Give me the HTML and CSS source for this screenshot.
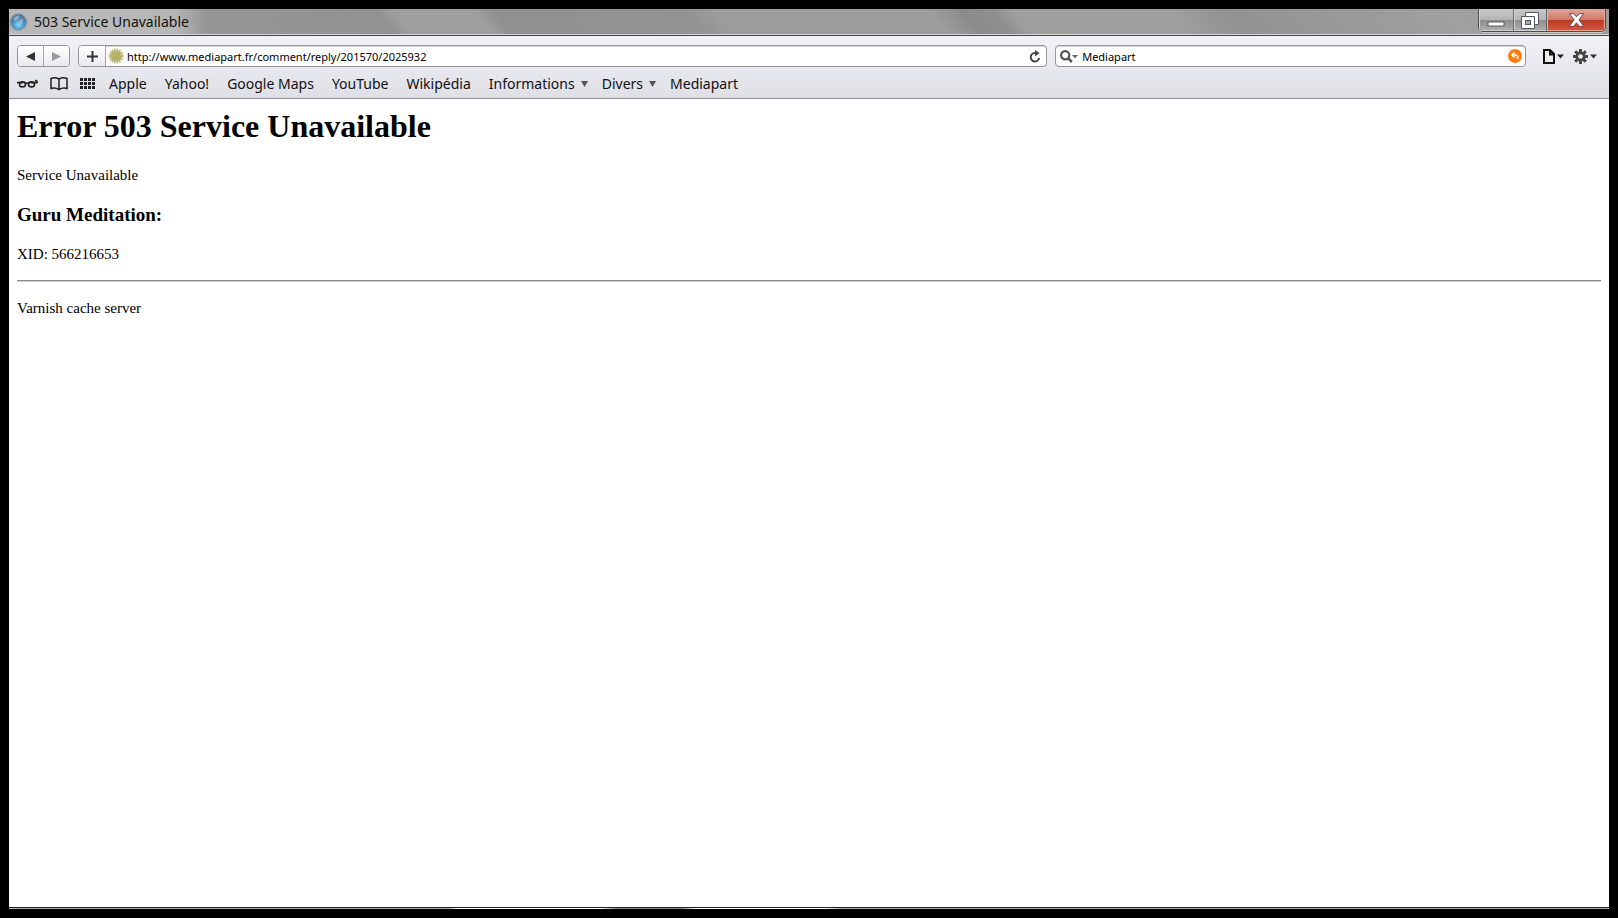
FILE: index.html
```
<!DOCTYPE html>
<html lang="fr">
<head>
<meta charset="utf-8">
<title>503 Service Unavailable</title>
<link rel="stylesheet" href="styles.css">
</head>
<body>
<div class="window">
  <header class="titlebar">
    <div class="title">
      <svg class="app-icon" width="19" height="20" viewBox="0 0 19 20" aria-hidden="true">
        <defs><radialGradient id="globe" cx="50%" cy="68%" r="60%"><stop offset="0" stop-color="#8fd8f8"/><stop offset="0.55" stop-color="#4a9bd2"/><stop offset="1" stop-color="#4a7395"/></radialGradient></defs>
        <circle cx="9.500" cy="10" r="9" fill="#8e9ba4"/>
        <circle cx="9.500" cy="10" r="7.500" fill="url(#globe)"/>
        <path d="M4.500 7q2-4 6-3.500l-1 3-4 2zM11 8l3-1-1 4-2 1z" fill="#c3d3da" opacity=".6"/>
        <path d="M14 4l-3 5-1-1z" fill="#b07078"/>
      </svg>
      <span class="title-text">503 Service Unavailable</span>
    </div>
    <div class="window-controls">
      <button class="control minimize" type="button" aria-label="Réduire">
        <svg width="18" height="6" viewBox="0 0 18 6"><rect x="1" y="1" width="16" height="4" fill="#fff" stroke="#5a5c66"/></svg>
      </button>
      <button class="control maximize" type="button" aria-label="Restaurer">
        <svg width="18" height="17" viewBox="0 0 18 17"><path d="M4.500.5h13v12h-4v4H.5v-12h4z" fill="#fff" stroke="#555762"/><path d="M4.500 4.500h9v8" fill="none" stroke="#555762"/><rect x="4.500" y="8.500" width="5" height="4" fill="#aaa" stroke="#555762"/></svg>
      </button>
      <button class="control close" type="button" aria-label="Fermer">
        <svg width="17" height="14" viewBox="0 0 17 14"><path d="M1.500.7h4.300l2.700 3.200L11.200.7h4.300L10.900 6.800l4.900 6.500h-4.500L8.500 9.800l-2.800 3.500H1.200l4.900-6.500z" fill="#fff" stroke="#6a4a4e"/></svg>
      </button>
    </div>
  </header>

  <div class="chrome">
    <div class="toolbar">
      <div class="nav">
        <button class="nav-button" type="button" aria-label="Page précédente"><svg width="9" height="9" viewBox="0 0 9 9"><path d="M9 0v9L0 4.500z" fill="#333"/></svg></button>
        <button class="nav-button" type="button" aria-label="Page suivante"><svg width="9" height="9" viewBox="0 0 9 9"><path d="M0 0v9l9-4.500z" fill="#9b9b9b"/></svg></button>
      </div>
      <form class="address">
        <button class="add" type="button" aria-label="Ajouter un signet"><svg width="11" height="11" viewBox="0 0 11 11"><path d="M5.500 0v11M0 5.500h11" stroke="#333" stroke-width="2"/></svg></button>
        <svg class="site-icon" width="16" height="16" viewBox="0 0 16 16" aria-hidden="true"><circle cx="8" cy="8" r="5.500" fill="#b4b36c"/><circle cx="8" cy="8" r="6.200" fill="none" stroke="#b4b36c" stroke-width="2.600" stroke-dasharray="1.500 0.935"/></svg>
        <input class="field" type="text" aria-label="Adresse" value="http://www.mediapart.fr/comment/reply/201570/2025932">
        <button class="plain" type="button" aria-label="Recharger"><svg width="12" height="13" viewBox="0 0 12 13"><path d="M7 3H5.800a4.200 4.200 0 1 0 4.300 4.800" fill="none" stroke="#444" stroke-width="2"/><path d="M6 0l4.500 3L6 6.500z" fill="#444"/></svg></button>
      </form>
      <form class="search">
        <button class="plain" type="button" aria-label="Options de recherche"><svg width="18" height="13" viewBox="0 0 18 13"><circle cx="5.200" cy="5.200" r="4.100" fill="none" stroke="#555" stroke-width="2.200"/><path d="M7.800 7.800l4 4.200" stroke="#555" stroke-width="2.600"/><path d="M12 5h6l-3 3.500z" fill="#666"/></svg></button>
        <input class="field" type="text" aria-label="Recherche" value="Mediapart">
        <button class="plain" type="button" aria-label="Revenir aux résultats"><svg width="14" height="14" viewBox="0 0 14 14"><circle cx="7" cy="7" r="7" fill="#fb7d10"/><path d="M6.500 3.500L4 6l2.500 2.500M4.200 6h3.300q2.700.3 2.200 4.200" fill="none" stroke="#fff" stroke-width="1.700"/></svg></button>
      </form>
      <div class="menus">
        <button class="plain" type="button" aria-label="Page"><svg width="21" height="15" viewBox="0 0 21 15"><path d="M1 1h6l4 4v9H1zM7 1v4.500h4" fill="none" stroke="#111" stroke-width="2"/><path d="M14 5.500h7l-3.500 4z" fill="#222"/></svg></button>
        <button class="plain" type="button" aria-label="Réglages"><svg width="24" height="15" viewBox="0 0 24 15"><g stroke="#444" stroke-width="3"><path d="M7.500 0v15M0 7.500h15M2.200 2.200l10.600 10.600M12.800 2.200L2.200 12.800"/></g><circle cx="7.500" cy="7.500" r="5" fill="#444"/><circle cx="7.500" cy="7.500" r="2.300" fill="#ededf2"/><path d="M17 5.500h7l-3.500 4z" fill="#333"/></svg></button>
      </div>
    </div>

    <nav class="bookmarks" aria-label="Signets">
      <div class="tools">
        <button class="plain" type="button" aria-label="Liste de lecture"><svg width="21" height="9" viewBox="0 0 21 9"><g fill="none" stroke="#222" stroke-width="1.600"><ellipse cx="5.500" cy="5.400" rx="3" ry="2.500"/><ellipse cx="14.500" cy="5.400" rx="3" ry="2.500"/><path d="M8.300 4.500q1.700-1 3.400 0M0 3.600h6M14 3.600h6q.5-2-2-2.400"/></g></svg></button>
        <button class="plain" type="button" aria-label="Tous les signets"><svg width="18" height="14" viewBox="0 0 18 14"><path d="M9 2Q5-.2 1 1.500v10q4-1.500 8 1 4-2.500 8-1v-10Q13-.2 9 2zv10.500" fill="none" stroke="#222" stroke-width="1.500"/></svg></button>
        <button class="plain" type="button" aria-label="Top Sites"><svg width="15" height="11" viewBox="0 0 15 11"><path d="M0 1.500h15M0 5.500h15M0 9.500h15" stroke="#222" stroke-width="3" stroke-dasharray="3 1"/></svg></button>
      </div>
      <a class="bookmark" href="#">Apple</a>
      <a class="bookmark" href="#">Yahoo!</a>
      <a class="bookmark" href="#">Google Maps</a>
      <a class="bookmark" href="#">YouTube</a>
      <a class="bookmark" href="#">Wikipédia</a>
      <a class="bookmark folder" href="#">Informations<svg width="7" height="6" viewBox="0 0 7 6"><path d="M0 0h7L3.500 6z" fill="#555"/></svg></a>
      <a class="bookmark folder" href="#">Divers<svg width="7" height="6" viewBox="0 0 7 6"><path d="M0 0h7L3.500 6z" fill="#555"/></svg></a>
      <a class="bookmark" href="#">Mediapart</a>
    </nav>
  </div>

  <main class="page">
    <h1>Error 503 Service Unavailable</h1>
    <p>Service Unavailable</p>
    <h3>Guru Meditation:</h3>
    <p>XID: 566216653</p>
    <hr>
    <p>Varnish cache server</p>
  </main>
  <div class="window-edge"></div>
</div>
</body>
</html>
```
FILE: styles.css
```
* { box-sizing: border-box; }

body {
  margin: 0;
  padding: 9px;
  min-height: 100vh;
  display: flex;
  background: #000;
  font-family: "Noto Sans", "Open Sans", sans-serif;
  color: #111;
}

button {
  margin: 0;
  padding: 0;
  border: 0;
  background: none;
  display: flex;
  align-items: center;
  justify-content: center;
}

svg { display: block; flex: none; }

.window {
  flex: 1;
  min-width: 0;
  display: flex;
  flex-direction: column;
  background: #fff;
}

.titlebar {
  height: 27px;
  display: flex;
  justify-content: space-between;
  align-items: flex-start;
  padding-right: 3px;
  border-bottom: 1px solid #44444a;
  box-shadow: inset 0 -1px #d5d5d8;
  background: linear-gradient(50deg, #a2a2a2 0 8%, #969696 12%, #929292 24%, #9f9f9f 25% 30%, #909090 31%, #939393 43%, #9d9d9d 45% 58%, #8b8b8b 60%, #909090 62%, #9e9e9e 63% 73%, #929292 76%, #a0a0a0 90%, #999 100%);
}

.title {
  height: 25px;
  display: flex;
  align-items: center;
  gap: 6px;
  padding: 1px 16px 0 0;
  background: linear-gradient(90deg, #c4c4c4aa, #c4c4c4aa 85%, transparent);
}

.title-text { font-size: 14px; line-height: 24px; white-space: nowrap; }

.window-controls {
  display: flex;
  height: 23px;
  border: 1px solid #4d4d52;
  border-top: 0;
  border-radius: 0 0 5px 5px;
  box-shadow: 0 1px #c8c8c8;
  overflow: hidden;
}

.control {
  width: 35px;
  border-right: 1px solid #66666a;
  background: linear-gradient(#c9c9c9, #b5b5b5 48%, #8d8d8d 52%, #b1b1b1);
  box-shadow: inset 1px 0 #d6d6d6, inset 0 -1px #ccc;
}
.minimize { padding-top: 8px; }
.maximize { width: 33px; }
.close {
  width: 58px;
  border-right: 0;
  background: linear-gradient(#dea598, #d2786a 48%, #bd3a22 52%, #d5573f);
  box-shadow: inset 1px 0 #e3aaa0, inset -1px -1px #e9a493;
}

.chrome {
  height: 63px;
  padding: 9px 12px 0 8px;
  border-bottom: 1px solid #929297;
  background: linear-gradient(#f1f1f6, #dfdfe6);
}

.toolbar { display: flex; align-items: center; gap: 8px; }

.nav, .address, .search {
  height: 22px;
  display: flex;
  align-items: stretch;
  border: 1px solid #949499;
  border-radius: 4px;
  background: #fff;
  overflow: hidden;
}
.address, .search { align-items: center; box-shadow: inset 0 1px #d5d5d8; }
.address { flex: 25 1 0; padding-right: 5px; }
.search { flex: 12 1 0; padding: 0 3px 0 4px; }

.nav-button, .add {
  width: 26px;
  background: linear-gradient(#fff, #eaeaee);
}
.nav { width: 53px; }
.nav-button + .nav-button { border-left: 1px solid #a5a5aa; }
.add { height: 100%; width: 27px; border-right: 1px solid #a5a5aa; }
.site-icon { margin: 0 3px 0 2px; }

.field {
  flex: 1;
  min-width: 0;
  padding: 1px 0 0;
  border: 0;
  outline: 0;
  background: transparent;
  font: 11px/18px "Noto Sans", "Open Sans", sans-serif;
  color: #000;
}
.search .field { padding-left: 4px; }

.menus { display: flex; gap: 9px; margin-left: 9px; }

.bookmarks {
  display: flex;
  align-items: center;
  gap: 18px;
  height: 33px;
}
.tools { display: flex; align-items: center; gap: 12px; margin-right: -4px; }

.bookmark {
  display: flex;
  align-items: center;
  gap: 6px;
  font-size: 14px;
  line-height: 20px;
  color: #111;
  text-decoration: none;
  white-space: nowrap;
}
.folder { margin-right: -4px; }

.page {
  flex: 1;
  padding: 8px;
  font: 15px/18px "Liberation Serif", "Times New Roman", serif;
  color: #000;
}
.page h1 { margin: 0 0 21px; font-size: 32px; line-height: 38px; }
.page h3 { margin: 19px 0; font-size: 19px; line-height: 23px; }
.page p { margin: 0; }
.page hr { margin: 17px 0; border: 0; border-top: 1px solid #8c8c8c; border-bottom: 1px solid #ccc; }

.window-edge {
  height: 2px;
  border-top: 1px solid #222;
  background: linear-gradient(90deg, #aaa 27.5%, #fff 28% 37%, #888 38% 42%, #fff 43% 51%, #aaa 52%);
}
```
